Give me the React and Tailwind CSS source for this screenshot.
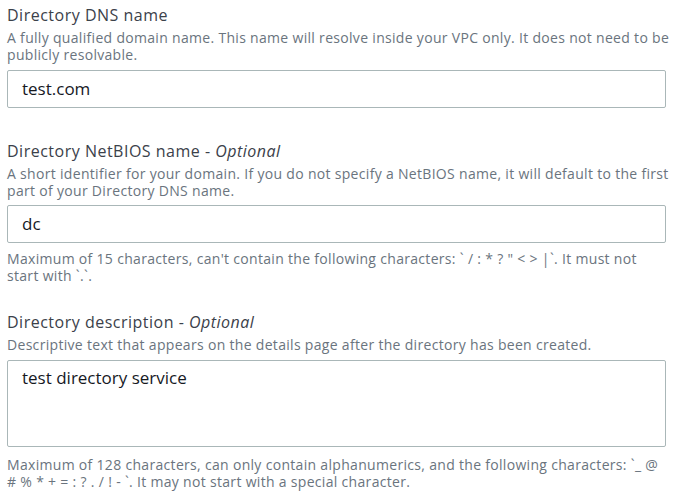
export default function App() {
  const font = { fontFamily: '"Open Sans", "Noto Sans", sans-serif' };
  return (
    <div className="w-[679px] h-[494px] bg-white pl-[7px] pr-[4px] pt-[5px] overflow-hidden" style={font}>
      {/* DNS name */}
      <div className="text-[16px] leading-[20px] tracking-[0.5px] text-[#3b414a]">Directory DNS name</div>
      <div className="mt-[4px] text-[14px] leading-[17px] tracking-[0.31px] text-[#6a747e] whitespace-nowrap">
        A fully qualified domain name. This name will resolve inside your VPC only. It does not need to be
        <br />
        publicly resolvable.
      </div>
      <div className="mt-[7px] mr-[9px] h-[38px] border border-[#aab7b8] rounded-[2px] flex items-center pl-[14px] text-[17px] text-[#16191f]">
        test.com
      </div>

      {/* NetBIOS */}
      <div className="mt-[33px] text-[16px] leading-[20px] tracking-[0.5px] text-[#3b414a]">
        Directory NetBIOS name - <i>Optional</i>
      </div>
      <div className="mt-[4px] text-[14px] leading-[17px] tracking-[0.31px] text-[#6a747e] whitespace-nowrap">
        A short identifier for your domain. If you do not specify a NetBIOS name, it will default to the first
        <br />
        part of your Directory DNS name.
      </div>
      <div className="mt-[6px] mr-[9px] h-[38px] border border-[#aab7b8] rounded-[2px] flex items-center pl-[14px] text-[17px] text-[#16191f]">
        dc
      </div>
      <div className="mt-[7px] text-[14px] leading-[17px] tracking-[0.31px] text-[#6a747e] whitespace-nowrap">
        Maximum of 15 characters, can't contain the following characters: ` / : * ? " &lt; &gt; |`. It must not
        <br />
        start with `.`.
      </div>

      {/* Description */}
      <div className="mt-[28px] text-[16px] leading-[20px] tracking-[0.5px] text-[#3b414a]">
        Directory description - <i>Optional</i>
      </div>
      <div className="mt-[4px] text-[14px] leading-[17px] tracking-[0.31px] text-[#6a747e] whitespace-nowrap">
        Descriptive text that appears on the details page after the directory has been created.
      </div>
      <div className="mt-[7px] mr-[9px] h-[87px] border border-[#aab7b8] rounded-[2px] pl-[14px] pt-[6px] text-[17px] leading-[22px] text-[#16191f]">
        test directory service
      </div>
      <div className="mt-[9px] text-[14px] leading-[17px] tracking-[0.31px] text-[#6a747e] whitespace-nowrap">
        Maximum of 128 characters, can only contain alphanumerics, and the following characters: `_ @
        <br />
        # % * + = : ? . / ! - `. It may not start with a special character.
      </div>
    </div>
  );
}
